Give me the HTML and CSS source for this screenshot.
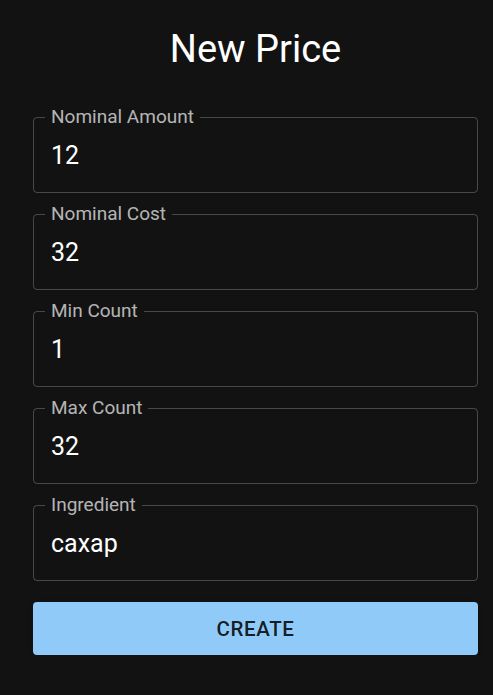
FILE: index.html
```html
<!DOCTYPE html>
<html lang="en">
<head>
<meta charset="utf-8">
<title>New Price</title>
<link rel="stylesheet" href="styles.css">
</head>
<body>
<main class="page">
  <h1 class="title">New Price</h1>
  <form class="form">
    <fieldset class="field">
      <legend class="field-label">Nominal Amount</legend>
      <input class="field-input" type="text" value="12">
    </fieldset>
    <fieldset class="field">
      <legend class="field-label">Nominal Cost</legend>
      <input class="field-input" type="text" value="32">
    </fieldset>
    <fieldset class="field">
      <legend class="field-label">Min Count</legend>
      <input class="field-input" type="text" value="1">
    </fieldset>
    <fieldset class="field">
      <legend class="field-label">Max Count</legend>
      <input class="field-input" type="text" value="32">
    </fieldset>
    <fieldset class="field">
      <legend class="field-label">Ingredient</legend>
      <input class="field-input" type="text" value="сахар">
    </fieldset>
    <button class="submit" type="button">Create</button>
  </form>
</main>
</body>
</html>
```

FILE: styles.css
```css
html, body {
  margin: 0;
  padding: 0;
  background: #121212;
  color: #fff;
  font-family: Roboto, "Noto Sans", "Liberation Sans", sans-serif;
}

.page {
  width: 445px;
  padding: 27px 15px 0 33px;
  box-sizing: content-box;
}

.title {
  margin: 0;
  font-size: 38px;
  line-height: 45.5px;
  font-weight: 400;
  text-align: center;
  color: #fff;
}

.form {
  display: flex;
  flex-direction: column;
  gap: 12px;
  margin-top: 35.5px;
}

.field {
  margin: 0;
  min-width: 0;
  border: 1px solid rgba(255, 255, 255, 0.23);
  border-radius: 4px;
  padding: 12px 17px 19.5px 17px;
}

.field-label {
  margin-left: -6px;
  padding: 0 6px;
  font-size: 19px;
  line-height: 18px;
  color: rgba(255, 255, 255, 0.7);
}

.field-input {
  display: block;
  width: 100%;
  box-sizing: border-box;
  margin: 0;
  padding: 0;
  border: none;
  outline: none;
  background: transparent;
  color: #fff;
  font-family: inherit;
  font-size: 25px;
  line-height: 34.5px;
  height: 34.5px;
}

.submit {
  margin-top: 9px;
  height: 53px;
  border: none;
  border-radius: 4px;
  background: #90caf9;
  color: rgba(0, 0, 0, 0.87);
  font-family: inherit;
  font-size: 20.5px;
  font-weight: 500;
  letter-spacing: 0.03em;
  text-transform: uppercase;
  display: flex;
  align-items: center;
  justify-content: center;
  box-shadow: 0 3px 1px -2px rgba(0,0,0,0.2), 0 2px 2px 0 rgba(0,0,0,0.14), 0 1px 5px 0 rgba(0,0,0,0.12);
}
```
